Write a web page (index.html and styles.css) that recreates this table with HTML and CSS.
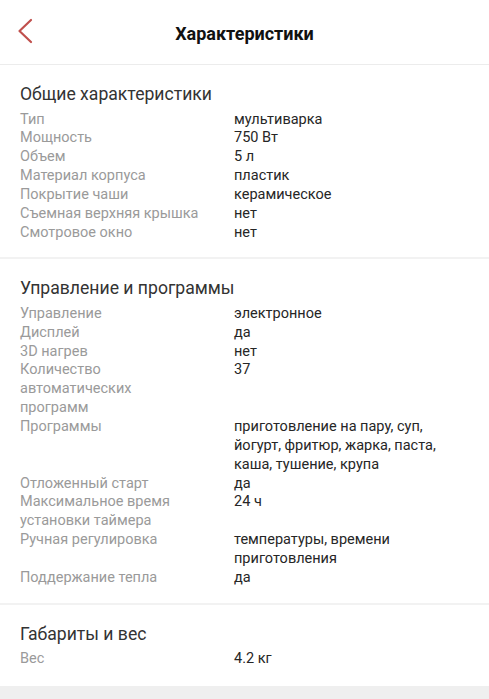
FILE: index.html
```html
<!DOCTYPE html>
<html lang="ru">
<head>
<meta charset="utf-8">
<title>Характеристики</title>
<link rel="stylesheet" href="styles.css">
</head>
<body>
<header class="topbar">
  <button class="back" aria-label="Назад">
    <svg width="16" height="26" viewBox="0 0 16 26"><path d="M14 2 L2.5 13 L14 24" fill="none" stroke="#c0504d" stroke-width="2.2" stroke-linecap="round" stroke-linejoin="round"/></svg>
  </button>
  <h1 class="title">Характеристики</h1>
</header>
<main>
  <section class="group">
    <h2 class="group-title">Общие характеристики</h2>
    <dl class="specs">
      <dt>Тип</dt><dd>мультиварка</dd>
      <dt>Мощность</dt><dd>750 Вт</dd>
      <dt>Объем</dt><dd>5 л</dd>
      <dt>Материал корпуса</dt><dd>пластик</dd>
      <dt>Покрытие чаши</dt><dd>керамическое</dd>
      <dt>Съемная верхняя крышка</dt><dd>нет</dd>
      <dt>Смотровое окно</dt><dd>нет</dd>
    </dl>
  </section>
  <section class="group">
    <h2 class="group-title">Управление и программы</h2>
    <dl class="specs">
      <dt>Управление</dt><dd>электронное</dd>
      <dt>Дисплей</dt><dd>да</dd>
      <dt>3D нагрев</dt><dd>нет</dd>
      <dt>Количество автоматических программ</dt><dd>37</dd>
      <dt>Программы</dt><dd>приготовление на пару, суп, йогурт, фритюр, жарка, паста, каша, тушение, крупа</dd>
      <dt>Отложенный старт</dt><dd>да</dd>
      <dt>Максимальное время установки таймера</dt><dd>24 ч</dd>
      <dt>Ручная регулировка</dt><dd>температуры, времени приготовления</dd>
      <dt>Поддержание тепла</dt><dd>да</dd>
    </dl>
  </section>
  <section class="group last">
    <h2 class="group-title">Габариты и вес</h2>
    <dl class="specs">
      <dt>Вес</dt><dd>4.2 кг</dd>
    </dl>
  </section>
  <div class="footer-band"></div>
</main>
</body>
</html>
```
FILE: styles.css
```css
* { box-sizing: border-box; }
html, body { margin: 0; padding: 0; background: #fff; }
body {
  font-family: Roboto, "Noto Sans", "Liberation Sans", sans-serif;
  color: #222;
}
.topbar {
  height: 65px;
  border-bottom: 1px solid #ececec;
  display: flex;
  align-items: center;
  justify-content: center;
  position: relative;
}
.back {
  position: absolute;
  left: 17px;
  top: 18px;
  padding: 0;
  border: 0;
  background: none;
  display: flex;
}
.title {
  margin: 0;
  font-size: 18px;
  font-weight: 700;
  color: #111;
  padding-top: 2px;
}
.group {
  padding: 17px 20px 15px;
  border-bottom: 2px solid #f2f2f2;
}
.group.last {
  border-bottom: 0;
  padding-bottom: 17px;
}
.group-title {
  margin: 0 0 4.5px;
  font-size: 17.6px;
  line-height: 24px;
  font-weight: 400;
  color: #333;
}
.specs {
  margin: 0;
  display: grid;
  grid-template-columns: 214px 1fr;
  font-size: 14.5px;
  line-height: 18.85px;
}
.specs dt {
  color: #9a9a9a;
  padding-right: 32px;
}
.specs dd {
  margin: 0;
  color: #262626;
}
.footer-band {
  height: 13px;
  background: #efefef;
}
```
